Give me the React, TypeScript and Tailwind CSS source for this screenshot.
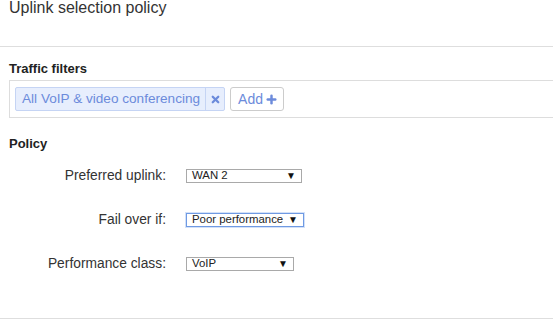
import { Plus, X } from "lucide-react";

const font = { fontFamily: '"Liberation Sans", Arial, sans-serif' };

function FakeSelect({
  value,
  width,
  focused,
}: {
  value: string;
  width: string;
  focused?: boolean;
}) {
  return (
    <div
      className={`flex h-[14px] items-center justify-between bg-white pl-[5px] pr-[5px] text-[11.4px] leading-none text-[#222] ${width} ${
        focused ? "border border-[#6f9ae3] shadow-[0_0_0_1px_#d3e1f8]" : "border border-[#a9a9a9]"
      }`}
    >
      <span>{value}</span>
      <span className="text-[10px] leading-none text-[#111]">▼</span>
    </div>
  );
}

function Row({ label, children }: { label: string; children: React.ReactNode }) {
  return (
    <div className="flex h-[44px] items-center">
      <div className="w-[166px] text-right text-[13.8px] text-[#333]">{label}</div>
      <div className="ml-[20px]">{children}</div>
    </div>
  );
}

export default function App() {
  return (
    <div className="min-h-screen w-full bg-white" style={font}>
      {/* Header */}
      <div className="h-[47px] border-b border-[#dedede] pl-[9px]">
        <h1 className="text-[16px] font-normal leading-[16px] text-[#333]">
          Uplink selection policy
        </h1>
      </div>

      {/* Traffic filters */}
      <div className="pt-[14px]">
        <h2 className="pl-[9px] text-[13px] font-bold leading-[16px] text-[#222]">
          Traffic filters
        </h2>
        <div className="ml-[9px] mt-[3px] flex h-[38px] items-center gap-[5px] border-y border-l border-[#dddddd] pl-[5px]">
          <div className="flex h-[24px] items-stretch rounded-[2px] border border-[#c5d4f4] bg-[#e7eefd] text-[13.6px] text-[#6c8bdb]">
            <span className="flex items-center pl-[6px] pr-[5px]">All VoIP &amp; video conferencing</span>
            <span className="flex w-[19px] items-center justify-center border-l border-[#c5d4f4]">
              <X className="h-[11px] w-[11px]" strokeWidth={5} />
            </span>
          </div>
          <div className="flex h-[24px] items-center gap-[2px] rounded-[3px] border border-[#cccccc] bg-white pl-[7px] pr-[5px] text-[14px] text-[#6c8bdb]">
            <span>Add</span>
            <Plus className="h-[13px] w-[13px]" strokeWidth={4.5} />
          </div>
        </div>
      </div>

      {/* Policy */}
      <div className="pt-[18px]">
        <h2 className="pl-[9px] text-[13px] font-bold leading-[16px] text-[#222]">Policy</h2>
        <div className="mt-[2px] flex flex-col">
          <Row label="Preferred uplink:">
            <FakeSelect value="WAN 2" width="w-[116px]" />
          </Row>
          <Row label="Fail over if:">
            <FakeSelect value="Poor performance" width="w-[118px]" focused />
          </Row>
          <Row label="Performance class:">
            <FakeSelect value="VoIP" width="w-[108px]" />
          </Row>
        </div>
        <div className="mt-[32px] border-b border-[#dedede]" />
      </div>
    </div>
  );
}
